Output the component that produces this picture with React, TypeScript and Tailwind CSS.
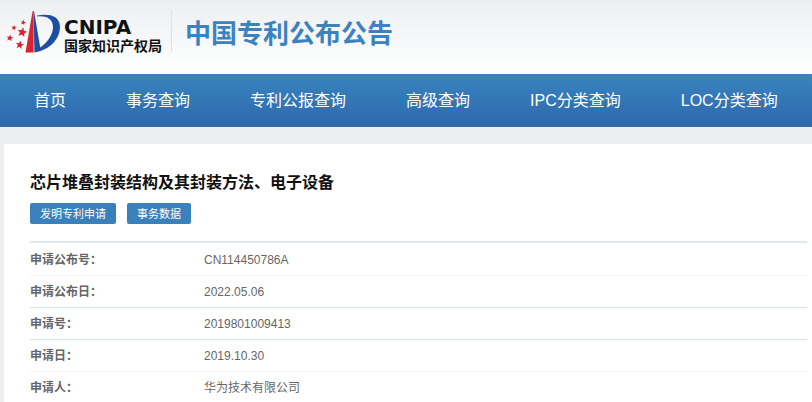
import React from 'react';

interface NavItem {
  label: string;
  href: string;
}

interface PatentField {
  label: string;
  value: string;
  lineClass: string;
}

const navItems: NavItem[] = [
  { label: '首页', href: '#home' },
  { label: '事务查询', href: '#affairs' },
  { label: '专利公报查询', href: '#gazette' },
  { label: '高级查询', href: '#advanced' },
  { label: 'IPC分类查询', href: '#ipc' },
  { label: 'LOC分类查询', href: '#loc' },
];

const fields: PatentField[] = [
  { label: '申请公布号：', value: 'CN114450786A', lineClass: 'border-[#f3f5f6]' },
  { label: '申请公布日：', value: '2022.05.06', lineClass: 'border-[#d8e2ea]' },
  { label: '申请号：', value: '2019801009413', lineClass: 'border-[#d8e2ea]' },
  { label: '申请日：', value: '2019.10.30', lineClass: 'border-[#f3f5f6]' },
  { label: '申请人：', value: '华为技术有限公司', lineClass: 'border-[#d8e2ea]' },
];

const STAR = 'M0 -10 L2.6 -3.4 L9.5 -3.1 L4.1 1.3 L5.9 8.1 L0 4.2 L-5.9 8.1 L-4.1 1.3 L-9.5 -3.1 L-2.6 -3.4 Z';

const LogoMark: React.FC = () => (
  <svg viewBox="0 0 56 44" className="h-11 w-14 shrink-0" aria-hidden="true">
    <g fill="#d9232e">
      <path d={STAR} transform="translate(16.2 22.3) rotate(12) scale(0.52)" />
      <path d={STAR} transform="translate(17.2 12.5) rotate(15) scale(0.28)" />
      <path d={STAR} transform="translate(8 17.8) rotate(10) scale(0.28)" />
      <path d={STAR} transform="translate(3.8 28) rotate(10) scale(0.36)" />
      <path d={STAR} transform="translate(13.8 35) rotate(12) scale(0.44)" />
      <path d="M26.6 1 L27.6 1 L27.6 42.5 L19.5 42.5 Z" />
    </g>
    <g fill="#1f4da3">
      <path d="M27.6 1 L28 1 L34.8 41 L28.4 42.5 Z" />
      <path d="M31 5.6 C40 3.5 54 4 54 17 C54 29 44 38 34.5 41 L33.5 38 C41 33 47 25 47 17 C47 8 39 5.5 31 6.6 Z" />
    </g>
  </svg>
);

const App: React.FC = () => {
  return (
    <div className="min-h-screen bg-[#ebeef0] font-['Liberation_Sans','Noto_Sans_CJK_SC',sans-serif]">
      <header className="flex h-[74px] items-start bg-linear-to-b from-[#eceff1] to-white pt-[10px] pl-[6px]">
        <a href="#home" className="flex items-start text-[#111]">
          <LogoMark />
          <span className="flex flex-col pt-[7px] pl-[2px]">
            <span className="font-['DejaVu_Sans',sans-serif] text-[20px] leading-5 font-bold">CNIPA</span>
            <span className="text-sm leading-[18px] font-bold whitespace-nowrap">国家知识产权局</span>
          </span>
        </a>
        <div className="ml-[9px] h-[42px] w-px bg-[#dfe2e4]" />
        <div className="ml-[13px] pt-1 text-[26px] leading-10 font-bold whitespace-nowrap text-[#3c82bf]">
          中国专利公布公告
        </div>
      </header>

      <nav className="h-[53px] border-b-2 border-[#3b68a5] bg-linear-to-b from-[#3984bf] to-[#2f69ad] pl-1">
        <ul className="flex">
          {navItems.map((item) => (
            <li key={item.href}>
              <a href={item.href} className="block px-[30px] text-base leading-[54px] whitespace-nowrap text-white">
                {item.label}
              </a>
            </li>
          ))}
        </ul>
      </nav>

      <main className="mt-[17px] ml-1 bg-white pt-[27px] pr-[5px] pl-[26px]">
        <h1 className="text-base leading-6 font-bold text-[#111]">芯片堆叠封装结构及其封装方法、电子设备</h1>
        <div className="mt-2 flex gap-[11px]">
          <button type="button" className="h-[21px] rounded-xs bg-[#3a80bb] px-[10px] text-[11px] leading-5 text-white">
            发明专利申请
          </button>
          <button type="button" className="h-[21px] rounded-xs bg-[#3a80bb] px-[10px] text-[11px] leading-5 text-white">
            事务数据
          </button>
        </div>
        <div className="mt-[17px] border-t-2 border-[#dde8f0]">
          <table className="w-full border-collapse text-left text-xs text-[#666]">
            <tbody>
              {fields.map((field) => (
                <tr key={field.label} className={`h-8 border-b ${field.lineClass}`}>
                  <th scope="row" className="w-[174px] pt-[2px] font-bold">{field.label}</th>
                  <td className="pt-[2px]">{field.value}</td>
                </tr>
              ))}
            </tbody>
          </table>
        </div>
      </main>
    </div>
  );
};

export default App;
